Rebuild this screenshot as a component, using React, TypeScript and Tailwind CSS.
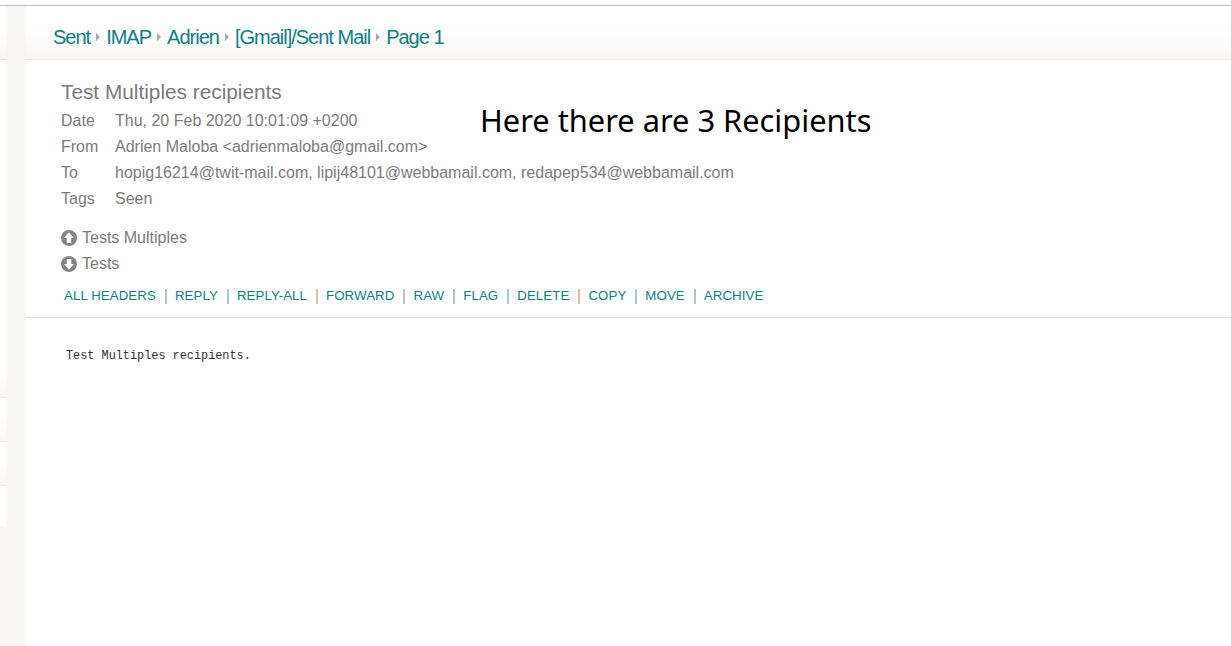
const crumbs = ['Sent', 'IMAP', 'Adrien', '[Gmail]/Sent Mail', 'Page 1']

const meta = [
  { label: 'Date', value: 'Thu, 20 Feb 2020 10:01:09 +0200' },
  { label: 'From', value: 'Adrien Maloba <adrienmaloba@gmail.com>' },
  { label: 'To', value: 'hopig16214@twit-mail.com, lipij48101@webbamail.com, redapep534@webbamail.com' },
  { label: 'Tags', value: 'Seen' },
]

const actions = [
  { label: 'ALL HEADERS' },
  { label: 'REPLY', bar: 'bg-[#a9c6da]' },
  { label: 'REPLY-ALL', bar: 'bg-[#a5cccc]' },
  { label: 'FORWARD', bar: 'bg-[#e0bf9f]' },
  { label: 'RAW', bar: 'bg-[#b4c6d2]' },
  { label: 'FLAG', bar: 'bg-[#a9c6da]' },
  { label: 'DELETE', bar: 'bg-[#a9c6da]' },
  { label: 'COPY', bar: 'bg-[#e0bf9f]' },
  { label: 'MOVE', bar: 'bg-[#a5cccc]' },
  { label: 'ARCHIVE', bar: 'bg-[#b0c4d8]' },
]

const CircleArrow = ({ down }: { down?: boolean }) => (
  <svg width="16" height="16" viewBox="0 0 16 16" className={down ? 'rotate-180' : ''}>
    <circle cx="8" cy="8" r="8" fill="#858585" />
    <path d="M8 2.5 13 8H10.2V13H5.8V8H3Z" fill="#fff" />
  </svg>
)

// leftover bits of the sidebar that peek out at the far left
const SideRow = ({ h }: { h: string }) => (
  <div className={`${h} w-[6px] border-b border-[#ece8e6] bg-gradient-to-b from-white from-50% to-[#f9f6f5]`} />
)

export default function App() {
  return (
    <div className="flex h-[646px] w-[1231px] flex-col overflow-hidden bg-white font-['Liberation_Sans',Arial,sans-serif] text-[#7c7c7c]">
      <div className="h-[6px] shrink-0 border-b border-[#b8bcc4]" />
      <div className="flex min-h-0 flex-1">
        <div className="flex w-[26px] shrink-0 flex-col bg-[#f9f6f5]">
          <SideRow h="h-[54px]" />
          <div className="h-[294px] w-[6px] bg-white" />
          <SideRow h="h-[44px]" />
          <SideRow h="h-[44px]" />
          <SideRow h="h-[44px]" />
          <div className="h-[40px] w-[6px] bg-white" />
        </div>
        <div className="min-w-0 flex-1">
          <div className="flex h-[54px] items-center border-b border-[#ece8e6] bg-gradient-to-b from-white from-40% to-[#f9f6f5] pl-[27px] pt-[8px] text-[20px] tracking-[-1px] text-[#0f7f86]">
            {crumbs.map((c, i) => (
              <span key={c} className="flex items-center">
                {i > 0 && <span className="mx-[6px] h-0 w-0 border-y-[4px] border-l-[4px] border-y-transparent border-l-[#aaa]" />}
                {c}
              </span>
            ))}
          </div>
          <div className="relative pl-[35px] pt-[20px]">
            <div className="text-[20.8px] leading-[24px]">Test Multiples recipients</div>
            <div className="mt-[4px] flex flex-col text-[16px] leading-[26px]">
              {meta.map(m => (
                <div key={m.label} className="flex">
                  <span className="w-[54px]">{m.label}</span>
                  <span>{m.value}</span>
                </div>
              ))}
            </div>
            <div className="mt-[13px] flex flex-col text-[16px] leading-[26px]">
              <div className="flex items-center gap-[5px]"><CircleArrow />Tests Multiples</div>
              <div className="flex items-center gap-[5px]"><CircleArrow down />Tests</div>
            </div>
            <div className="mt-[11px] flex pl-[3px] text-[13.3px] leading-[16px] tracking-[0.07px] text-[#0f7f86]">
              {actions.map(a => (
                <span key={a.label} className="flex items-center">
                  {a.bar && <span className={`ml-[9px] mr-[8px] h-[15px] w-[2px] ${a.bar}`} />}
                  {a.label}
                </span>
              ))}
            </div>
            <div className="absolute left-[454px] top-[38px] font-['Noto_Sans',sans-serif] text-[30.8px] leading-[44px] text-black">Here there are 3 Recipients</div>
          </div>
          <div className="mt-[13px] border-t border-[#e2e2e2] pl-[40px] pt-[30px] font-['Liberation_Mono',monospace] text-[11.85px] leading-[16px] text-[#333]">
            Test Multiples recipients.
          </div>
        </div>
      </div>
    </div>
  )
}
